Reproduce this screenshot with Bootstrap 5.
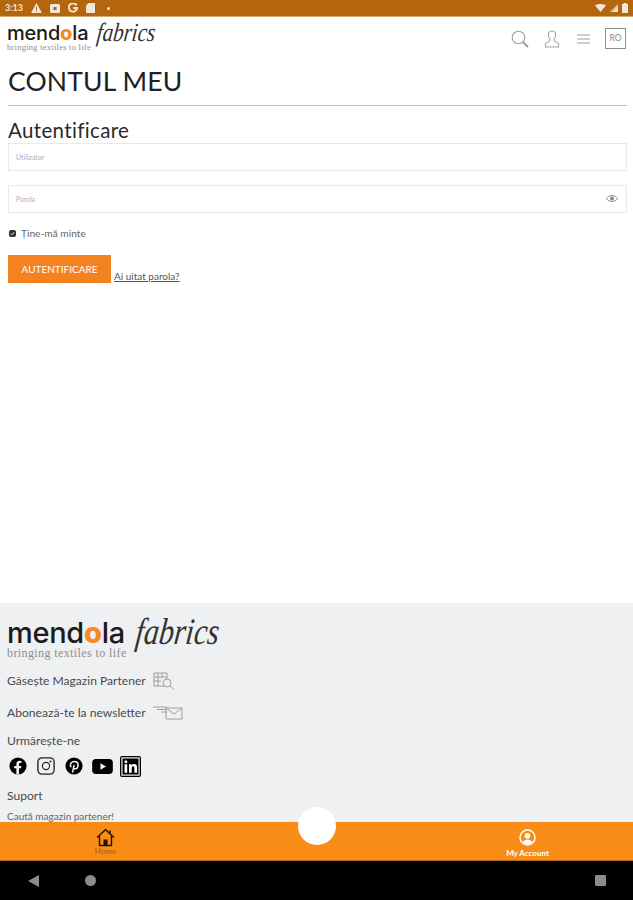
<!DOCTYPE html>
<html lang="ro"><head><meta charset="utf-8">
<link href="https://cdn.jsdelivr.net/npm/bootstrap@5.3.0/dist/css/bootstrap.min.css" rel="stylesheet">
<style>
html,body{margin:0;height:900px;overflow:hidden}
body{font-family:"Lato","Liberation Sans",sans-serif;color:#222;background:#fff}
.shell{height:900px}
.statusbar{height:17px;background:#b4660f;border-bottom:1px solid #d8a873;color:#f3e6d8;font-size:9px;font-weight:700;padding:0 5px 0 5px}
.topbar{height:41px;padding:4px 7px 0 7px}
.brand{display:flex;flex-direction:column;line-height:1;position:relative}
.brand-word{font-family:"Inter","Liberation Sans",sans-serif;font-weight:500;color:#1b1b1b}
.brand-word b{color:#f58a1f;font-weight:800}
.brand-script{font-family:"Liberation Serif",serif;font-style:italic;color:#333;position:absolute;transform:scaleY(1.25) skewX(-8deg);transform-origin:left center}
.brand-tag{font-family:"Liberation Serif",serif;color:#8f8f8f;white-space:nowrap}
.brand-sm{width:150px;height:30px}
.brand-sm .brand-word{font-size:20px;margin-top:2px;letter-spacing:-.2px}
.brand-sm .brand-script{font-size:21px;left:90px;top:1px}
.brand-sm .brand-tag{font-size:8.500px;letter-spacing:.25px}
.brand-lg{width:215px;height:44px}
.brand-lg .brand-word{font-size:29px;letter-spacing:-.3px}
.brand-lg .brand-script{font-size:30px;left:129px;top:-2px}
.brand-lg .brand-tag{font-size:12px;letter-spacing:.4px}
.lang{width:21px;height:21px;border:1px solid #8d8d8d;color:#8d8d8d;font-size:8.500px;margin-left:15px;margin-top:7px}
.ticons{gap:15px;padding-top:9px}
.burger{margin-left:2px}
.account{padding:0 6px 0 8px}
.pagetitle{font-size:26.500px;font-weight:400;color:#1d2024;line-height:1;margin:10px 0 0;padding-bottom:10px;border-bottom:1px solid #bdbdbd;height:38px;letter-spacing:.15px}
.subtitle{font-size:20.500px;font-weight:400;line-height:21px;margin:14px 0 0;letter-spacing:.35px;color:#2a2a2a}
.fieldbox{height:28px;border:1px solid #e9e9e9;border-radius:0;font-size:7px;padding:0 7px;color:#a8a8a8;box-shadow:none;background:#fff}
.fieldbox::placeholder{color:#b0b0b0}
.fieldwrap{position:relative}
.fieldwrap svg{position:absolute;right:9px;top:9px}
.mt-first{margin-top:2px}
.mt-second{margin-top:14px}
.remember{margin-top:14px;font-size:10.200px;color:#666;line-height:12px;gap:5px;padding-left:1px}
.fakecheck{width:7px;height:7px;border-radius:2px;background:#333;display:inline-flex;align-items:center;justify-content:center}
.actions{margin-top:16px}
.btn-login{background:#f58220;color:#fff;border:0;border-radius:0;font-size:10px;height:28px;width:103px;padding:0}
.forgot{font-size:10px;color:#555;margin-left:3px;margin-bottom:1px;line-height:11px}
.sitefooter{height:219px;background:#eef0f2;padding:15px 7px 0;overflow:hidden;color:#4a4a4a;font-size:12.100px;line-height:14px}
.linkline{gap:7px;height:20px}
.line-a{margin-top:9px}
.line-b{margin-top:12px}
.follow{margin-top:11px}
.socials{margin:6px 0 0 2px;height:24px}
.socials svg{margin-right:10px}
.socials .yt{margin-right:7px}
.socials .pin{margin-right:9px}
.foot-h{margin-top:11px}
.foot-small{font-size:10px;color:#666;margin-top:6px}
.tabbar{height:39px;background:#f98c17;border-bottom:1px solid #b5660f;position:relative;font-size:8px;line-height:9px}
.tabhome{width:211px;color:#a85c10;padding-top:6px}
.tabacct{width:211px;color:#fff;font-weight:700;padding-top:7px}
.tabacct span{margin-top:3px}
.fab{position:absolute;left:298px;top:-15px;width:38px;height:38px;border-radius:50%;background:#fff}
.sysnav{height:39px;background:#000;padding:0 27px 0 28px}
.sysleft{gap:46px}
</style></head>
<body>
<div class="shell d-flex flex-column">
  <div class="statusbar d-flex align-items-center justify-content-between">
    <div class="d-flex align-items-center gap-1">
      <span class="me-1">3:13</span>
      <svg width="11" height="10" viewBox="0 0 11 10"><path d="M5.500 0 11 10H0z" fill="#f3e6d8"/><rect x="5" y="3.500" width="1" height="3.500" fill="#b4660f"/><rect x="5" y="7.600" width="1" height="1" fill="#b4660f"/></svg>
      <svg class="ms-1" width="10" height="9" viewBox="0 0 10 9"><rect width="10" height="9" rx="1.500" fill="#f3e6d8"/><rect x="3.500" y="3" width="3" height="3" fill="#b4660f"/></svg>
      <svg class="ms-1" width="10" height="10" viewBox="0 0 10 10"><path d="M8.600 2.200A4.200 4.200 0 1 0 9.200 5H5.200" fill="none" stroke="#f3e6d8" stroke-width="1.900"/></svg>
      <svg class="ms-1" width="9" height="10" viewBox="0 0 9 10"><path d="M2.500 0H9v10H0V2.500z" fill="#f3e6d8"/></svg>
      <svg class="ms-2" width="3" height="3" viewBox="0 0 3 3"><circle cx="1.500" cy="1.500" r="1.500" fill="#f3e6d8"/></svg>
    </div>
    <div class="d-flex align-items-center gap-1">
      <svg width="11" height="8" viewBox="0 0 11 8"><path d="M0 1.500C3 -.5 8 -.5 11 1.500L5.500 8z" fill="#f3e6d8"/></svg>
      <svg width="8" height="8" viewBox="0 0 8 8"><path d="M8 0V8H0z" fill="#e5c39d"/><path d="M8 3V8H3z" fill="#f3e6d8"/></svg>
      <svg width="6" height="10" viewBox="0 0 6 10"><path d="M1.500 1V0h3v1H6v9H0V1z" fill="#f3e6d8"/></svg>
    </div>
  </div>

  <header class="topbar d-flex justify-content-between align-items-start">
    <div class="brand brand-sm">
      <span class="brand-word">mend<b>o</b>la</span>
      <span class="brand-script">fabrics</span>
      <span class="brand-tag">bringing textiles to life</span>
    </div>
    <div class="d-flex align-items-start">
      <div class="d-flex ticons">
        <svg width="18" height="18" viewBox="0 0 18 18" fill="none" stroke="#9a9a9a"><circle cx="7.500" cy="7.500" r="6.300" stroke-width="1.100"/><path d="M12 12l5 5" stroke-width="1.800"/></svg>
        <svg width="16" height="18" viewBox="0 0 16 18" fill="none" stroke="#a5a5a5" stroke-width="1.100"><path d="M8 1c2.400 0 3.600 1.800 3.600 3.800S10.800 8.500 10 9.500c-.4 1 .3 1.600 1.500 2.100 1.800.7 3 1.300 3 2.400V17H1.500v-3c0-1.100 1.200-1.700 3-2.400C5.700 11.100 6.400 10.500 6 9.500 5.200 8.500 4.400 6.800 4.400 4.800S5.600 1 8 1z"/></svg>
        <svg class="burger" width="13" height="18" viewBox="0 0 13 18" stroke="#a0a0a0" stroke-width="1.200"><path d="M0 5h13M0 9h13M0 13h13"/></svg>
      </div>
      <div class="lang d-flex align-items-center justify-content-center">RO</div>
    </div>
  </header>

  <main class="account flex-grow-1">
    <h1 class="pagetitle">CONTUL MEU</h1>
    <h2 class="subtitle">Autentificare</h2>
    <form>
      <input class="form-control fieldbox mt-first" type="text" placeholder="Utilizator">
      <div class="fieldwrap mt-second">
        <input class="form-control fieldbox" type="password" placeholder="Parola">
        <svg width="12" height="9" viewBox="0 0 12 9"><path d="M.5 4.500C3 .5 9 .5 11.500 4.500 9 8.500 3 8.500.5 4.500z" fill="none" stroke="#888"/><circle cx="6" cy="4.500" r="2" fill="#888"/></svg>
      </div>
      <div class="remember d-flex align-items-center">
        <span class="fakecheck"><svg width="5" height="5" viewBox="0 0 5 5"><path d="M.7 2.500l1.300 1.400L4.300 1" fill="none" stroke="#fff" stroke-width=".8"/></svg></span>
        <span>Ține-mă minte</span>
      </div>
      <div class="actions d-flex align-items-end">
        <button type="button" class="btn btn-login">AUTENTIFICARE</button>
        <a href="#" class="forgot">Ai uitat parola?</a>
      </div>
    </form>
  </main>

  <footer class="sitefooter">
    <div class="brand brand-lg">
      <span class="brand-word">mend<b>o</b>la</span>
      <span class="brand-script">fabrics</span>
      <span class="brand-tag">bringing textiles to life</span>
    </div>
    <div class="d-flex align-items-center linkline line-a">
      <span>Găsește Magazin Partener</span>
      <svg width="22" height="18" viewBox="0 0 22 18" fill="none" stroke="#8a8a8a" stroke-width=".8"><path d="M1 1h13v13H1zM1 5h13M1 9h7M5 1v13M9 1v5"/><circle cx="14" cy="11" r="4" fill="#eef0f2"/><path d="M17 14l4 3.500"/></svg>
    </div>
    <div class="d-flex align-items-center linkline line-b">
      <span>Abonează-te la newsletter</span>
      <svg width="30" height="14" viewBox="0 0 30 14" fill="none" stroke="#8a8a8a" stroke-width=".8"><path d="M0 1h14M4 3.500h9M8 6h6M13 2h16v11H13zM13 2l8 6 8-6"/></svg>
    </div>
    <div class="follow">Urmărește-ne</div>
    <div class="d-flex align-items-center socials">
      <svg width="18" height="18" viewBox="0 0 20 20"><circle cx="10" cy="10" r="9.500" fill="#000"/><path d="M8.200 19.500v-7H5.800V10h2.400V8c0-2.400 1.400-3.700 3.600-3.700l2 .2v2.300h-1.200c-1.100 0-1.500.7-1.500 1.400V10h2.600l-.4 2.500h-2.200v7z" fill="#eef0f2"/></svg>
      <svg width="18" height="18" viewBox="0 0 20 20" fill="none" stroke="#222"><rect x="1" y="1" width="18" height="18" rx="4.500" stroke-width="1.500"/><circle cx="10" cy="10" r="4" stroke-width="1.300"/><circle cx="15" cy="5" r="1.100" fill="#222" stroke="none"/></svg>
      <svg class="pin" width="18" height="18" viewBox="0 0 20 20"><circle cx="10" cy="10" r="9.500" fill="#000"/><path d="M8.500 16.500 10 9.500M6.500 10.800C5 7.500 7.500 5 10.300 5c2.600 0 4.200 1.700 4.200 3.900 0 2.500-1.500 4.300-3.400 4.300-1.100 0-1.800-.7-1.700-1.600" fill="none" stroke="#eef0f2" stroke-width="1.700" stroke-linecap="round"/></svg>
      <svg class="yt" width="21" height="15" viewBox="0 0 22 16"><rect width="22" height="16" rx="4" fill="#000"/><path d="M8.800 4.500v7l6-3.500z" fill="#eef0f2"/></svg>
      <svg width="21" height="21" viewBox="0 0 21 21"><rect width="21" height="21" rx="2" fill="#000"/><rect x="1.300" y="1.300" width="18.400" height="18.400" fill="#eef0f2"/><rect x="2.500" y="2.500" width="16" height="16" fill="#000"/><path d="M4.500 8.200h2.700v8.500H4.500zM5.900 4.200a1.500 1.500 0 1 1 0 3 1.500 1.500 0 0 1 0-3zM9 8.200h2.500v1.200c.5-.9 1.500-1.400 2.600-1.400 2.300 0 3 1.500 3 3.700v5h-2.700v-4.500c0-1.100-.3-1.900-1.300-1.900s-1.400.8-1.400 1.900v4.500H9z" fill="#fff"/></svg>
    </div>
    <div class="foot-h">Suport</div>
    <div class="foot-small">Caută magazin partener!</div>
  </footer>

  <nav class="tabbar d-flex justify-content-between">
    <div class="tabhome d-flex flex-column align-items-center">
      <svg width="19" height="19" viewBox="0 0 19 19" fill="none" stroke="#221204" stroke-width="1.400"><path d="M1 9.500 9.500 1.800 18 9.500M3.500 8v9.500h12V8M14 2.500v3"/><rect x="7.500" y="11.500" width="4" height="6" fill="#221204" stroke="none"/></svg>
      <span>Home</span>
    </div>
    <div class="tabacct d-flex flex-column align-items-center">
      <svg width="17" height="17" viewBox="0 0 17 17"><circle cx="8.500" cy="8.500" r="7.500" fill="none" stroke="#fff" stroke-width="1.500"/><circle cx="8.500" cy="6.800" r="2.800" fill="#fff"/><path d="M3.600 13.600c1-2.400 2.800-3.200 4.900-3.200s3.900.8 4.900 3.200a7 7 0 0 1-9.800 0z" fill="#fff"/></svg>
      <span>My Account</span>
    </div>
    <div class="fab"></div>
  </nav>

  <div class="sysnav d-flex align-items-center justify-content-between">
    <div class="d-flex align-items-center sysleft">
      <svg width="11" height="12" viewBox="0 0 11 12"><path d="M11 0V12L0 6z" fill="#8c8c8c"/></svg>
      <svg width="11" height="11" viewBox="0 0 11 11"><circle cx="5.500" cy="5.500" r="5.500" fill="#8c8c8c"/></svg>
    </div>
    <svg width="11" height="11" viewBox="0 0 11 11"><rect width="11" height="11" rx="1" fill="#8c8c8c"/></svg>
  </div>
</div>
</body></html>
